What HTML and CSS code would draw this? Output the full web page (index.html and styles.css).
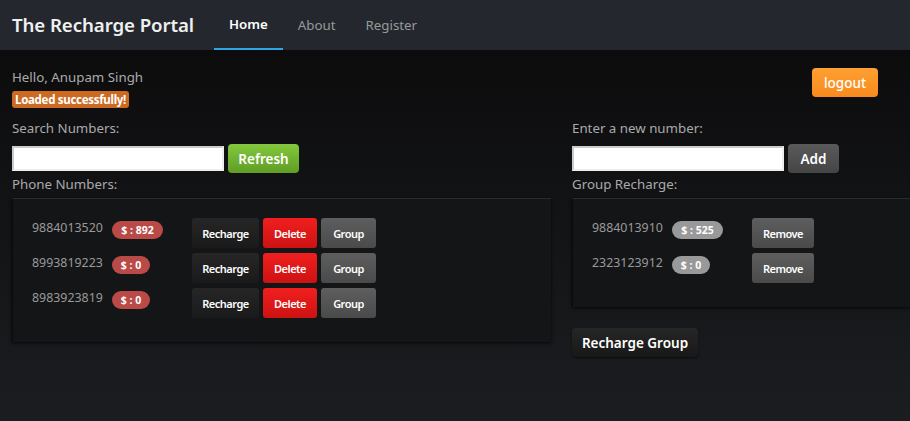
FILE: index.html
```html
<!DOCTYPE html>
<html>
<head>
<meta charset="utf-8">
<link rel="stylesheet" href="styles.css">
</head>
<body>
<header class="navbar">
  <span class="brand">The Recharge Portal</span>
  <nav class="nav">
    <a class="nav-item active">Home</a>
    <a class="nav-item">About</a>
    <a class="nav-item">Register</a>
  </nav>
</header>
<main class="page">
  <div class="top">
    <div class="greeting">
      <div class="hello">Hello, Anupam Singh</div>
      <span class="label-warning">Loaded successfully!</span>
    </div>
    <button class="btn btn-orange">logout</button>
  </div>
  <div class="columns">
    <section class="col">
      <div class="field-label">Search Numbers:</div>
      <div class="input-row">
        <input class="text-input" type="text">
        <button class="btn btn-green">Refresh</button>
      </div>
      <div class="field-label tight">Phone Numbers:</div>
      <div class="well">
        <div class="row">
          <span class="num">9884013520</span>
          <span class="badge red wide">$ : 892</span>
          <div class="actions">
            <button class="sbtn dark">Recharge</button>
            <button class="sbtn redb">Delete</button>
            <button class="sbtn grey">Group</button>
          </div>
        </div>
        <div class="row">
          <span class="num">8993819223</span>
          <span class="badge red">$ : 0</span>
          <div class="actions">
            <button class="sbtn dark">Recharge</button>
            <button class="sbtn redb">Delete</button>
            <button class="sbtn grey">Group</button>
          </div>
        </div>
        <div class="row">
          <span class="num">8983923819</span>
          <span class="badge red">$ : 0</span>
          <div class="actions">
            <button class="sbtn dark">Recharge</button>
            <button class="sbtn redb">Delete</button>
            <button class="sbtn grey">Group</button>
          </div>
        </div>
      </div>
    </section>
    <section class="col col-right">
      <div class="field-label">Enter a new number:</div>
      <div class="input-row">
        <input class="text-input" type="text">
        <button class="btn btn-grey">Add</button>
      </div>
      <div class="field-label tight">Group Recharge:</div>
      <div class="well well-right">
        <div class="row">
          <span class="num">9884013910</span>
          <span class="badge lgrey wide">$ : 525</span>
          <div class="actions">
            <button class="sbtn grey rm">Remove</button>
          </div>
        </div>
        <div class="row">
          <span class="num">2323123912</span>
          <span class="badge lgrey">$ : 0</span>
          <div class="actions">
            <button class="sbtn grey rm">Remove</button>
          </div>
        </div>
      </div>
      <button class="btn btn-black">Recharge Group</button>
    </section>
  </div>
</main>
</body>
</html>
```

FILE: styles.css
```css
html, body {
  margin: 0;
  padding: 0;
  overflow: hidden;
}
body {
  width: 910px;
  height: 421px;
  font-family: "Noto Sans", "Open Sans", sans-serif;
  background: linear-gradient(to bottom, #0a0a0a 0px, #0c0c0d 50px, #1b1d20 421px);
  color: #999;
}
.navbar {
  height: 50px;
  background: #24282e;
  display: flex;
  align-items: stretch;
  padding-left: 12px;
  box-sizing: border-box;
}
.brand {
  font-size: 18.7px;
  font-weight: 600;
  color: #f0f0f0;
  line-height: 50px;
  margin-right: 20px;
  letter-spacing: -0.1px;
}
.nav {
  display: flex;
}
.nav-item {
  font-size: 13.3px;
  color: #999;
  line-height: 50px;
  padding: 0 15px;
  box-sizing: border-box;
  height: 50px;
}
.nav-item.active {
  color: #fff;
  font-weight: 600;
  border-bottom: 2px solid #2fa4e7;
  line-height: 49px;
}
.page {
  padding: 18px 0 0 12px;
}
.top {
  display: flex;
  justify-content: space-between;
  align-items: flex-start;
  width: 866px;
}
.hello {
  font-size: 13.3px;
  color: #aaa;
  line-height: 20px;
  margin-top: -1px;
}
.label-warning {
  display: inline-block;
  background: #cc6a22;
  color: #fff;
  font-weight: 700;
  font-size: 11.5px;
  line-height: 17px;
  padding: 0 3px;
  border-radius: 3px;
  margin-top: 1px;
  letter-spacing: -0.3px;
}
.btn {
  font-family: inherit;
  border: none;
  border-radius: 4px;
  color: #fff;
  font-size: 13.5px;
  cursor: pointer;
}
.btn-orange {
  background: linear-gradient(to bottom, #fea032, #f88a1e);
  width: 66px;
  height: 29px;
  padding: 0;
  margin-top: 0;
  font-weight: 500;
}
.columns {
  display: flex;
  gap: 21px;
  margin-top: 9px;
}
.col {
  width: 539px;
  flex: none;
}
.col-right {
  width: 338px;
}
.field-label {
  font-size: 13.3px;
  color: #aaa;
  line-height: 20px;
  margin-bottom: 6px;
}
.field-label.tight {
  margin-top: 1px;
  margin-bottom: 4px;
}
.input-row {
  display: flex;
  align-items: center;
  gap: 4px;
}
.text-input {
  width: 212px;
  height: 25px;
  box-sizing: border-box;
  margin: 0;
  border: 2px solid #ccc;
  border-right-color: #eee;
  border-bottom-color: #eee;
  background: #fff;
  padding: 0;
}
.btn-green {
  background: linear-gradient(to bottom, #83c83d, #5f9d24);
  width: 71px;
  height: 29px;
  font-weight: 600;
}
.btn-grey {
  background: linear-gradient(to bottom, #5a5a5a, #454545);
  width: 51px;
  height: 29px;
  font-weight: 600;
}
.well {
  background: #141517;
  border-top: 1px solid #2b2b2b;
  border-left: 1px solid #0a0a0a;
  box-shadow: 0 1px 3px rgba(0,0,0,0.8);
  padding: 19px 19px 19px 19px;
  height: 105px;
}
.well-right {
  height: 70px;
  margin-bottom: 21px;
  border-right: none;
}
.row {
  display: flex;
  align-items: flex-start;
  height: 35px;
}
.num {
  font-size: 12.4px;
  color: #999;
  line-height: 18px;
  width: 80px;
  margin-top: 1px;
}
.badge {
  font-size: 10.5px;
  font-weight: 700;
  color: #fff;
  height: 18px;
  line-height: 18px;
  border-radius: 9px;
  margin-top: 3px;
  width: 38px;
  text-align: center;
  flex: none;
}
.badge.wide {
  width: 51px;
}
.badge.red {
  background: #b94a48;
}
.badge.lgrey {
  background: #999;
}
.actions {
  display: flex;
  gap: 4px;
}
.badge.wide + .actions {
  margin-left: 29px;
}
.badge:not(.wide) + .actions {
  margin-left: 42px;
}
.sbtn {
  font-family: inherit;
  font-size: 11px;
  font-weight: 600;
  color: #fff;
  border: none;
  border-radius: 3px;
  height: 30px;
  padding: 0;
  letter-spacing: -0.5px;
}
.sbtn.dark {
  background: linear-gradient(to bottom, #262626, #1a1a1a);
  width: 67px;
}
.sbtn.redb {
  background: linear-gradient(to bottom, #f21f1f, #cc1212);
  width: 54px;
}
.sbtn.grey {
  background: linear-gradient(to bottom, #5e5e5e, #4a4a4a);
  width: 55px;
}
.sbtn.rm {
  width: 62px;
}
.btn-black {
  background: linear-gradient(to bottom, #262626, #181818);
  width: 126px;
  height: 29px;
  font-weight: 600;
  box-shadow: 0 1px 2px rgba(0,0,0,0.6);
}
```
